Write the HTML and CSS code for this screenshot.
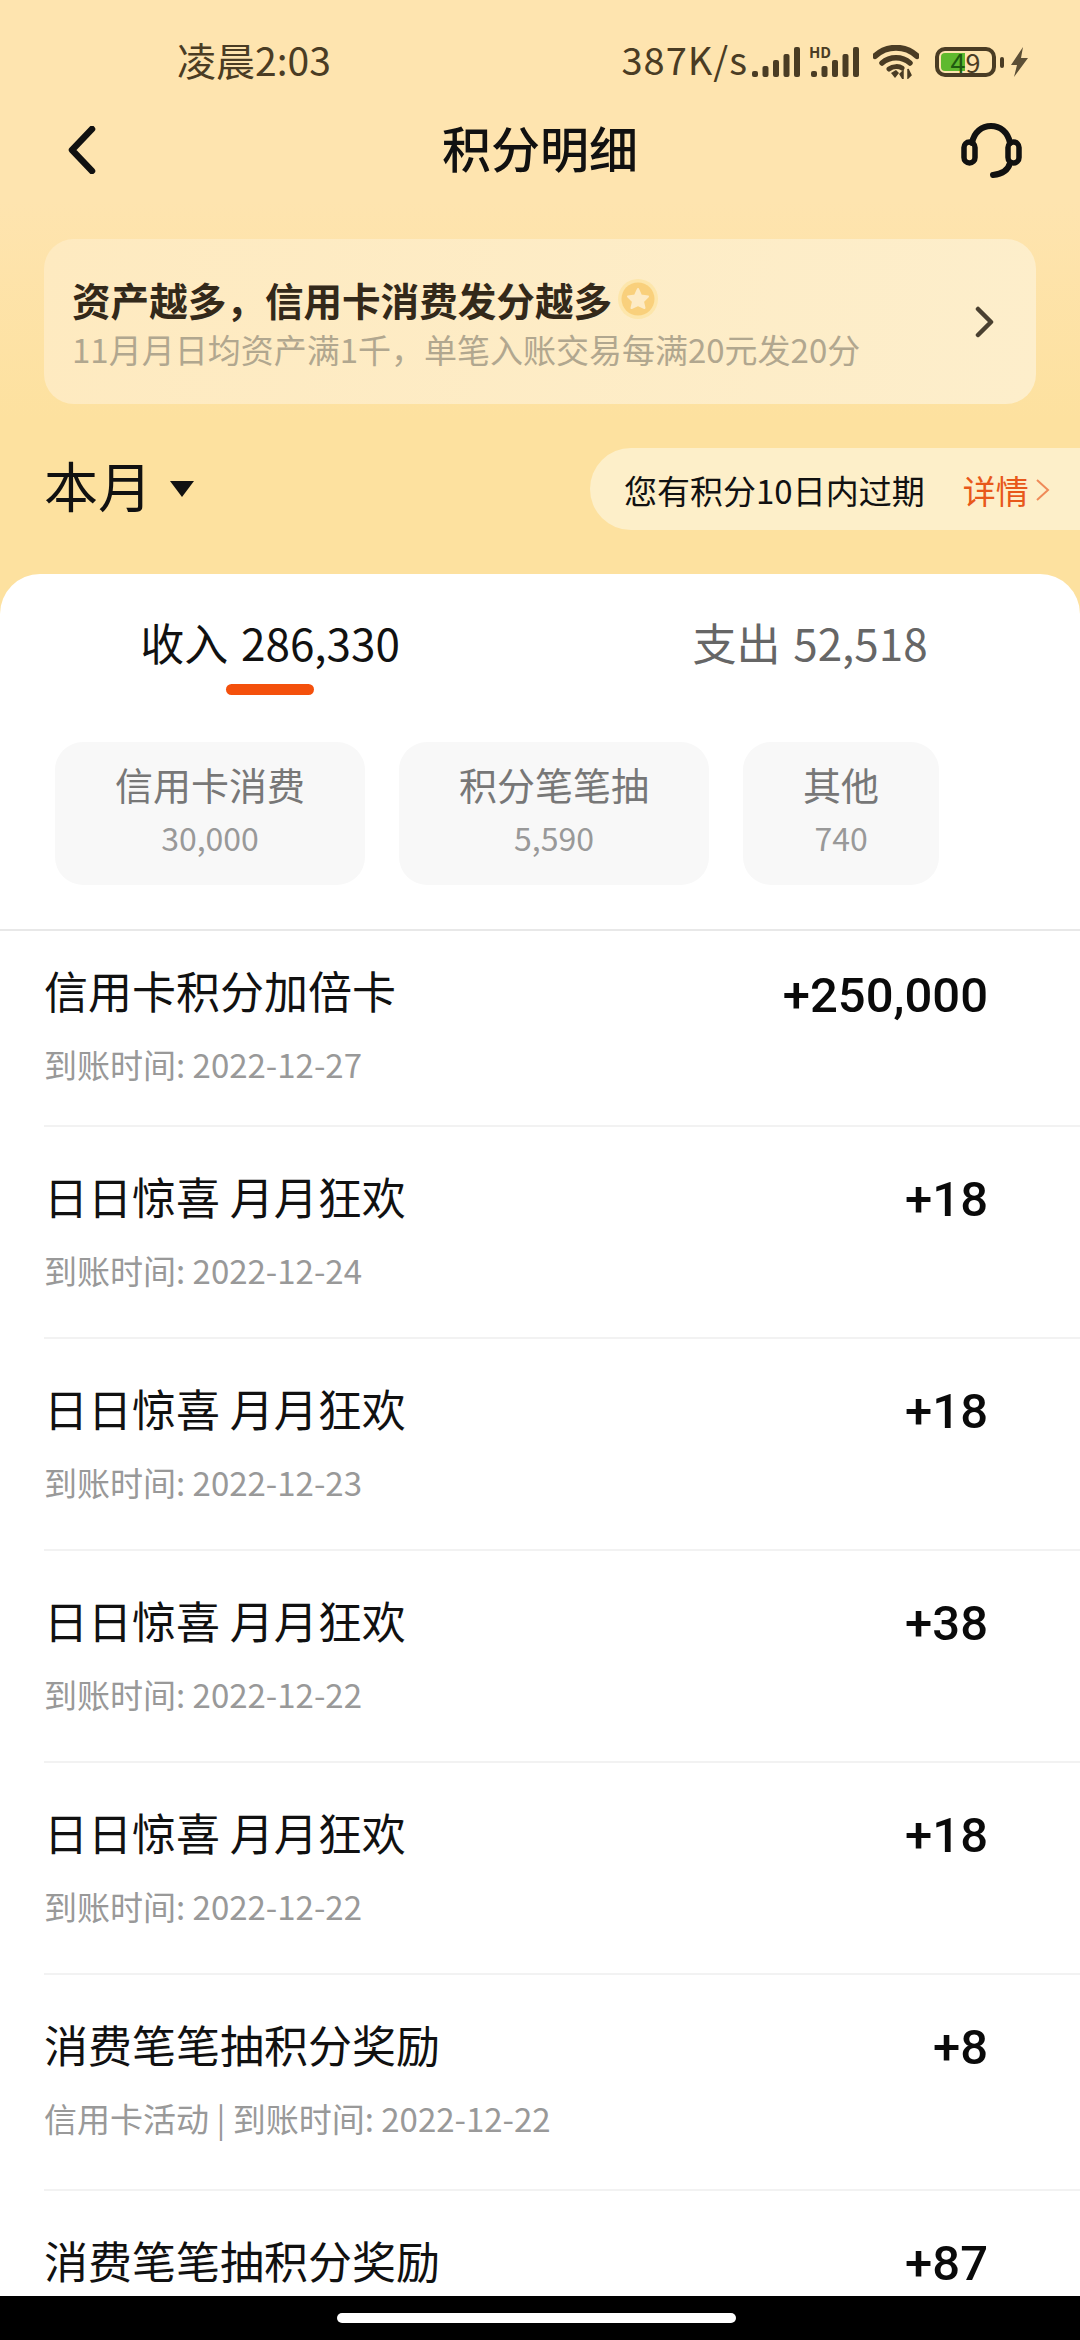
FILE: index.html
```html
<!DOCTYPE html>
<html>
  <head>
    <meta charset="utf-8">
    <title>积分明细</title>
    <link rel="stylesheet" href="styles.css">
  </head>
  <body>
    <div class="screen">
      <div class="status-bar">
        <span class="status-time">凌晨2:03</span>
        <div class="status-right">
          <span class="status-speed">387K/s</span>
          <svg class="signal" width="48" height="30" viewBox="0 0 48 30">
            <rect x="0" y="24" width="6" height="6" rx="2"/>
            <rect x="10.5" y="19" width="6" height="11" rx="2"/>
            <rect x="21" y="13" width="6" height="17" rx="2"/>
            <rect x="31.5" y="7" width="6" height="23" rx="2"/>
            <rect x="42" y="0" width="6" height="30" rx="2"/>
          </svg>
          <div class="signal-hd">
            <span class="hd-label">HD</span>
            <svg class="signal" width="48" height="30" viewBox="0 0 48 30">
              <rect x="0" y="24" width="6" height="6" rx="2"/>
              <rect x="10.5" y="19" width="6" height="11" rx="2"/>
              <rect x="21" y="13" width="6" height="17" rx="2"/>
              <rect x="31.5" y="7" width="6" height="23" rx="2"/>
              <rect x="42" y="0" width="6" height="30" rx="2"/>
            </svg>
          </div>
          <svg class="wifi" width="46" height="34" viewBox="0 0 46 34">
            <path d="M2 11 C14 0 32 0 44 11" fill="none" stroke="#4a3c24" stroke-width="6" stroke-linecap="round"/>
            <path d="M9 18 C17 11 29 11 37 18" fill="none" stroke="#4a3c24" stroke-width="5.5" stroke-linecap="round"/>
            <path d="M16 24 C20 21 26 21 29 23" fill="none" stroke="#4a3c24" stroke-width="5" stroke-linecap="round"/>
            <path d="M18 28 L23 25 L26 28 L22 33 Z" fill="#4a3c24"/>
            <path d="M30 34 V26 L27 29 Z M35 24 V33 L38 30 Z" fill="#4a3c24" stroke="#4a3c24" stroke-width="1.5"/>
          </svg>
          <div class="battery">
            <div class="battery-body"><span class="battery-dark">4</span><span>9</span></div>
            <div class="battery-nub"></div>
          </div>
          <svg class="bolt" width="17" height="30" viewBox="0 0 17 30">
            <path d="M12 0 L0 18 H6 L3 30 L17 11 H10 Z" fill="#5c4f36"/>
          </svg>
        </div>
      </div>

      <div class="top-nav">
        <svg class="nav-back" width="30" height="48" viewBox="0 0 30 48">
          <path d="M26 3 L6 24 L26 45" fill="none" stroke="#111" stroke-width="6.5" stroke-linecap="round" stroke-linejoin="round"/>
        </svg>
        <div class="nav-title">积分明细</div>
        <svg class="nav-help" width="62" height="56" viewBox="0 0 62 56">
          <path d="M12 21 C14 10 22 4 31 4 C40 4 48 10 50 21" fill="none" stroke="#111" stroke-width="6" stroke-linecap="round"/>
          <rect x="4" y="20" width="11" height="21" rx="5.5" fill="none" stroke="#111" stroke-width="5.5"/>
          <rect x="48" y="20" width="11" height="21" rx="5.5" fill="none" stroke="#111" stroke-width="5.5"/>
          <path d="M50 41 C48 49 42 52 33 53" fill="none" stroke="#111" stroke-width="6" stroke-linecap="round"/>
        </svg>
      </div>

      <div class="promo">
        <div class="promo-text">
          <div class="promo-title">
            资产越多，信用卡消费发分越多
            <svg class="coin" width="40" height="40" viewBox="0 0 40 40">
              <circle cx="20" cy="20" r="20" fill="#fde6ab"/>
              <circle cx="20" cy="20" r="16.5" fill="#f9d07c"/>
              <path d="M20 10 L23 16.5 L30 17.5 L25 22.5 L26.5 29 L20 26 L13.5 29 L15 22.5 L10 17.5 L17 16.5 Z" fill="#fdebc6" stroke="#fdebc6" stroke-width="2" stroke-linejoin="round"/>
            </svg>
          </div>
          <div class="promo-sub">11月月日均资产满1千，单笔入账交易每满20元发20分</div>
        </div>
        <svg class="promo-arrow" width="22" height="32" viewBox="0 0 22 32">
          <path d="M4 3 L17 16 L4 29" fill="none" stroke="#4a4030" stroke-width="4.5" stroke-linecap="round" stroke-linejoin="round"/>
        </svg>
      </div>

      <div class="period-row">
        <div class="period">
          <span class="period-label">本月</span>
          <span class="period-caret"></span>
        </div>
        <div class="expire">
          <span class="expire-text">您有积分10日内过期</span>
          <span class="expire-link">详情</span>
          <svg class="expire-arrow" width="16" height="24" viewBox="0 0 16 24">
            <path d="M2 2 L13 12 L2 22" fill="none" stroke="#ef8a58" stroke-width="2"/>
          </svg>
        </div>
      </div>

      <div class="card">
        <div class="tabs">
          <div class="tab tab-active">
            <div class="tab-text">收入 286,330</div>
            <div class="tab-line"></div>
          </div>
          <div class="tab">
            <div class="tab-text">支出 52,518</div>
            <div class="tab-line"></div>
          </div>
        </div>

        <div class="chips">
          <div class="chip">
            <div class="chip-label">信用卡消费</div>
            <div class="chip-value">30,000</div>
          </div>
          <div class="chip">
            <div class="chip-label">积分笔笔抽</div>
            <div class="chip-value">5,590</div>
          </div>
          <div class="chip">
            <div class="chip-label">其他</div>
            <div class="chip-value">740</div>
          </div>
        </div>

        <div class="list">
          <div class="row row-first">
            <div class="row-main">
              <div class="row-title">信用卡积分加倍卡</div>
              <div class="row-sub">到账时间: 2022-12-27</div>
            </div>
            <div class="row-amount">+250,000</div>
          </div>
          <div class="row">
            <div class="row-main">
              <div class="row-title">日日惊喜 月月狂欢</div>
              <div class="row-sub">到账时间: 2022-12-24</div>
            </div>
            <div class="row-amount">+18</div>
          </div>
          <div class="row">
            <div class="row-main">
              <div class="row-title">日日惊喜 月月狂欢</div>
              <div class="row-sub">到账时间: 2022-12-23</div>
            </div>
            <div class="row-amount">+18</div>
          </div>
          <div class="row">
            <div class="row-main">
              <div class="row-title">日日惊喜 月月狂欢</div>
              <div class="row-sub">到账时间: 2022-12-22</div>
            </div>
            <div class="row-amount">+38</div>
          </div>
          <div class="row">
            <div class="row-main">
              <div class="row-title">日日惊喜 月月狂欢</div>
              <div class="row-sub">到账时间: 2022-12-22</div>
            </div>
            <div class="row-amount">+18</div>
          </div>
          <div class="row row-tall">
            <div class="row-main">
              <div class="row-title">消费笔笔抽积分奖励</div>
              <div class="row-sub">信用卡活动 | 到账时间: 2022-12-22</div>
            </div>
            <div class="row-amount">+8</div>
          </div>
          <div class="row">
            <div class="row-main">
              <div class="row-title">消费笔笔抽积分奖励</div>
            </div>
            <div class="row-amount">+87</div>
          </div>
        </div>
      </div>

      <div class="home-bar">
        <div class="home-pill"></div>
      </div>
    </div>
  </body>
</html>
```

FILE: styles.css
```css
* {
  box-sizing: border-box;
}

body {
  margin: 0;
  font-family: "Noto Sans CJK SC", "Noto Sans", sans-serif;
}

.screen {
  width: 1080px;
  height: 2340px;
  display: flex;
  flex-direction: column;
  overflow: hidden;
  background: linear-gradient(#fee4af 0, #fee4af 200px, #fde19f 420px, #fde19f 100%);
}

/* status bar */
.status-bar {
  height: 100px;
  flex: none;
  display: flex;
  align-items: center;
  padding: 24px 52px 0 177px;
  color: #4a3c24;
}

.status-time {
  margin-top: -6px;
  font-size: 39px;
  line-height: 50px;
}

.status-right {
  margin-left: auto;
  display: flex;
  align-items: center;
}

.status-speed {
  margin-top: -6px;
  margin-right: 4px;
  font-size: 38px;
  line-height: 50px;
  letter-spacing: 1px;
}

.signal {
  fill: #4a3c24;
  display: block;
}

.signal-hd {
  position: relative;
  margin-left: 11px;
}

.hd-label {
  position: absolute;
  left: -2px;
  top: -2px;
  font-size: 15px;
  line-height: 14px;
  font-weight: 700;
}

.wifi {
  margin-left: 14px;
}

.battery {
  display: flex;
  align-items: center;
  margin-left: 16px;
}

.battery-body {
  width: 61px;
  height: 30px;
  border: 4px solid #4a3c24;
  border-radius: 10px;
  padding: 2px;
  background: linear-gradient(90deg, #5fb92e 0, #5fb92e 24px, transparent 24px) content-box;
  display: flex;
  align-items: center;
  justify-content: center;
  font-size: 27px;
  line-height: 22px;
}

.battery-dark {
  color: #1f5a10;
}

.battery-nub {
  width: 4px;
  height: 11px;
  margin-left: 4px;
  border-radius: 2px;
  background: #4a3c24;
}

.bolt {
  margin-left: 7px;
}

/* nav */
.top-nav {
  height: 100px;
  flex: none;
  display: grid;
  grid-template-columns: 1fr auto 1fr;
  align-items: center;
  padding: 0 58px 0 66px;
}

.nav-title {
  padding: 0 8px 6px 0;
  font-size: 49px;
  line-height: 64px;
  font-weight: 500;
  color: #111;
}

.nav-help {
  justify-self: end;
}

/* promo banner */
.promo {
  flex: none;
  height: 165px;
  margin: 39px 44px 0;
  padding: 0 40px 0 28px;
  border-radius: 30px;
  background: linear-gradient(100deg, #feeac0, #fdeecb);
  display: flex;
  align-items: center;
  justify-content: space-between;
}

.promo-text {
  padding-top: 2px;
}

.promo-title {
  display: flex;
  align-items: center;
  font-size: 38.6px;
  line-height: 50px;
  font-weight: 700;
  color: #33291a;
}

.coin {
  margin-left: 6px;
}

.promo-sub {
  margin-top: 3px;
  font-size: 33px;
  line-height: 44px;
  color: #b1a78f;
}

/* month row */
.period-row {
  flex: none;
  height: 82px;
  margin-top: 44px;
  display: flex;
  align-items: center;
  justify-content: space-between;
  padding-left: 44px;
}

.period {
  display: flex;
  align-items: center;
  margin-top: -8px;
}

.period-label {
  font-size: 54px;
  line-height: 70px;
  color: #111;
}

.period-caret {
  width: 0;
  height: 0;
  margin: 8px 0 0 18px;
  border-left: 12px solid transparent;
  border-right: 12px solid transparent;
  border-top: 16px solid #111;
}

.expire {
  width: 490px;
  height: 82px;
  padding: 2px 0 0 34px;
  display: flex;
  align-items: center;
  border-radius: 41px 0 0 41px;
  background: #fdefc9;
}

.expire-text {
  font-size: 33px;
  color: #111;
}

.expire-link {
  margin-left: 38px;
  font-size: 33px;
  color: #e8581a;
}

.expire-arrow {
  margin-left: 6px;
}

/* white card */
.card {
  flex: 1;
  min-height: 0;
  margin-top: 44px;
  overflow: hidden;
  background: #fff;
  border-radius: 40px 40px 0 0;
}

.tabs {
  display: flex;
  padding-top: 38px;
}

.tab {
  width: 540px;
  display: flex;
  flex-direction: column;
  align-items: center;
}

.tab-text {
  font-size: 44px;
  line-height: 60px;
  word-spacing: 3px;
  color: #666;
}

.tab-line {
  width: 88px;
  height: 11px;
  margin-top: 12px;
  border-radius: 6px;
}

.tab-active .tab-text {
  color: #111;
}

.tab-active .tab-line {
  background: #f4500c;
}

.chips {
  display: flex;
  gap: 34px;
  margin-top: 47px;
  padding: 0 55px;
}

.chip {
  height: 143px;
  padding: 17px 60px 0;
  border-radius: 28px;
  background: #f8f8f8;
  text-align: center;
}

.chip-label {
  font-size: 38px;
  line-height: 50px;
  color: #777;
}

.chip-value {
  margin-top: 6px;
  font-size: 32px;
  line-height: 44px;
  color: #999;
}

/* records */
.list {
  margin-top: 44px;
  border-top: 2px solid #e8e8e8;
}

.row {
  display: flex;
  justify-content: space-between;
  height: 212px;
  margin-left: 44px;
  padding: 42px 92px 0 0;
  border-bottom: 2px solid #f2f2f2;
}

.row-first {
  height: 196px;
  padding-top: 32px;
}

.row-tall {
  height: 216px;
}

.row-title {
  font-size: 44px;
  line-height: 54px;
  color: #111;
}

.row-sub {
  margin-top: 25px;
  font-size: 33px;
  line-height: 44px;
  color: #999;
}

.row-amount {
  margin-top: 2px;
  font-family: Roboto, sans-serif;
  font-size: 49px;
  line-height: 58px;
  font-weight: 500;
  color: #0a0a0a;
}

.row-first .row-amount {
  margin-top: 4px;
}

/* gesture bar */
.home-bar {
  flex: none;
  height: 44px;
  display: flex;
  align-items: center;
  justify-content: center;
  background: #000;
}

.home-pill {
  width: 399px;
  height: 10px;
  margin-right: 7px;
  border-radius: 5px;
  background: #fff;
}
```
